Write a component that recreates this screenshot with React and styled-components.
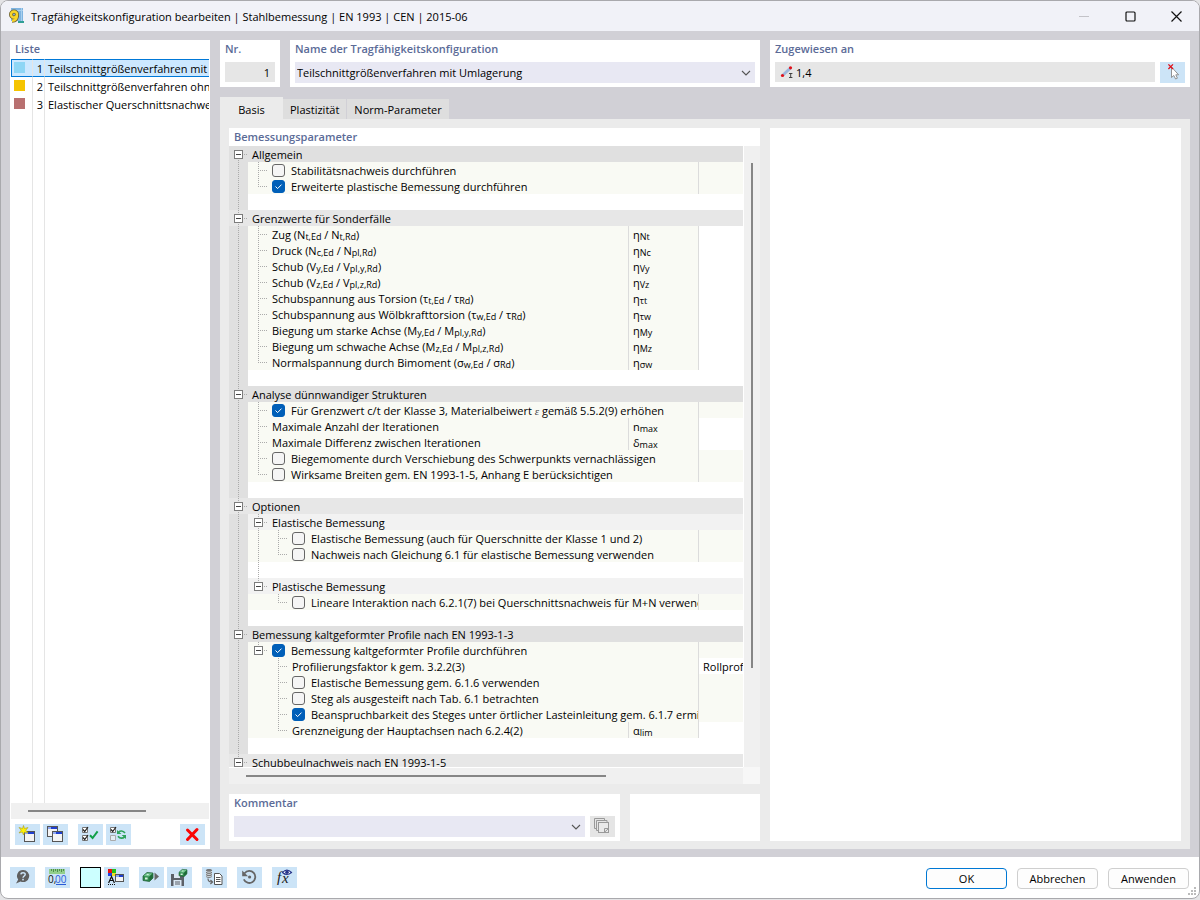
import React, { useState } from 'react';
import styled, { createGlobalStyle, css } from 'styled-components';

const Sub = styled.sub`
  position: relative;
  top: 1px;
  vertical-align: baseline;
  font-size: 9px;
  line-height: 1px;
`;

const Epsilon = styled.i`
  color: #444;
  font-family: "Liberation Serif", serif;
`;

const FormulaText = styled.text`
  fill: #222;
  font-family: "Liberation Serif", serif;
  font-size: 15px;
  font-style: italic;
`;

const configurations = [
  { id: 1, color: '#8ed6f5', name: 'Teilschnittgrößenverfahren mit Umlagerung' },
  { id: 2, color: '#f5c400', name: 'Teilschnittgrößenverfahren ohne Umlagerung' },
  { id: 3, color: '#b87070', name: 'Elastischer Querschnittsnachweis' },
];

const tabs = ['Basis', 'Plastizität', 'Norm-Parameter'];

// One character per tree level:
// "|" line, "t" branch, "L" last branch, "F" / "M" / "E" first, middle and last toggle, " " nothing
const rows = [
  { type: 'group', tree: 'F', label: 'Allgemein' },
  { tree: '|t', check: false, label: 'Stabilitätsnachweis durchführen' },
  { tree: '|L', check: true, label: 'Erweiterte plastische Bemessung durchführen' },
  { type: 'blank', tree: '|' },
  { type: 'group', light: true, tree: 'M', label: 'Grenzwerte für Sonderfälle' },
  { tree: '|t', label: <>Zug (N<Sub>t,Ed</Sub> / N<Sub>t,Rd</Sub>)</>, symbol: ['η', 'Nt'] },
  { tree: '|t', label: <>Druck (N<Sub>c,Ed</Sub> / N<Sub>pl,Rd</Sub>)</>, symbol: ['η', 'Nc'] },
  { tree: '|t', label: <>Schub (V<Sub>y,Ed</Sub> / V<Sub>pl,y,Rd</Sub>)</>, symbol: ['η', 'Vy'] },
  { tree: '|t', label: <>Schub (V<Sub>z,Ed</Sub> / V<Sub>pl,z,Rd</Sub>)</>, symbol: ['η', 'Vz'] },
  { tree: '|t', label: <>Schubspannung aus Torsion (τ<Sub>t,Ed</Sub> / τ<Sub>Rd</Sub>)</>, symbol: ['η', 'τt'] },
  { tree: '|t', label: <>Schubspannung aus Wölbkrafttorsion (τ<Sub>w,Ed</Sub> / τ<Sub>Rd</Sub>)</>, symbol: ['η', 'τw'] },
  { tree: '|t', label: <>Biegung um starke Achse (M<Sub>y,Ed</Sub> / M<Sub>pl,y,Rd</Sub>)</>, symbol: ['η', 'My'] },
  { tree: '|t', label: <>Biegung um schwache Achse (M<Sub>z,Ed</Sub> / M<Sub>pl,z,Rd</Sub>)</>, symbol: ['η', 'Mz'] },
  { tree: '|L', label: <>Normalspannung durch Bimoment (σ<Sub>w,Ed</Sub> / σ<Sub>Rd</Sub>)</>, symbol: ['η', 'σw'] },
  { type: 'blank', tree: '|' },
  { type: 'group', tree: 'M', label: 'Analyse dünnwandiger Strukturen' },
  { tree: '|t', check: true, label: <>Für Grenzwert c/t der Klasse 3, Materialbeiwert <Epsilon>ε</Epsilon> gemäß 5.5.2(9) erhöhen</> },
  { tree: '|t', label: 'Maximale Anzahl der Iterationen', symbol: ['n', 'max'] },
  { tree: '|t', label: 'Maximale Differenz zwischen Iterationen', symbol: ['δ', 'max'] },
  { tree: '|t', check: false, label: 'Biegemomente durch Verschiebung des Schwerpunkts vernachlässigen' },
  { tree: '|L', check: false, label: 'Wirksame Breiten gem. EN 1993-1-5, Anhang E berücksichtigen' },
  { type: 'blank', tree: '|' },
  { type: 'group', light: true, tree: 'M', label: 'Optionen' },
  { type: 'subgroup', tree: '|M', label: 'Elastische Bemessung' },
  { tree: '||t', check: false, label: 'Elastische Bemessung (auch für Querschnitte der Klasse 1 und 2)' },
  { tree: '||L', check: false, label: 'Nachweis nach Gleichung 6.1 für elastische Bemessung verwenden' },
  { type: 'blank', tree: '||' },
  { type: 'subgroup', tree: '|E', label: 'Plastische Bemessung' },
  { tree: '| L', check: false, label: 'Lineare Interaktion nach 6.2.1(7) bei Querschnittsnachweis für M+N verwenden' },
  { type: 'blank', tree: '|' },
  { type: 'group', tree: 'M', label: 'Bemessung kaltgeformter Profile nach EN 1993-1-3' },
  { tree: '|E', check: true, label: 'Bemessung kaltgeformter Profile durchführen' },
  { tree: '| t', label: 'Profilierungsfaktor k gem. 3.2.2(3)', value: 'Rollprofilieren' },
  { tree: '| t', check: false, label: 'Elastische Bemessung gem. 6.1.6 verwenden' },
  { tree: '| t', check: false, label: 'Steg als ausgesteift nach Tab. 6.1 betrachten' },
  { tree: '| t', check: true, label: 'Beanspruchbarkeit des Steges unter örtlicher Lasteinleitung gem. 6.1.7 ermitteln' },
  { tree: '| L', label: 'Grenzneigung der Hauptachsen nach 6.2.4(2)', symbol: ['α', 'lim'] },
  { type: 'blank', tree: '|' },
  { type: 'group', light: true, tree: 'M', label: 'Schubbeulnachweis nach EN 1993-1-5' },
];

function TreeRow({ row, index }) {
  const [checked, setChecked] = useState(Boolean(row.check));
  const hasCheck = row.check !== undefined;
  const id = `param-${index}`;

  const renderTree = () => row.tree.split('').map((kind, level) => (
    <Branch key={level} $root={level === 0} $kind={kind} $light={row.light}>
      {'FME'.includes(kind) && <Toggle type="button" aria-label="Zuklappen" />}
    </Branch>
  ));

  if (row.type) {
    return (
      <tr>
        <TreeCell colSpan={3} $type={row.type} $light={row.light}>
          <CellContent>
            {renderTree()}
            <Label as="span">{row.label}</Label>
          </CellContent>
        </TreeCell>
      </tr>
    );
  }

  return (
    <tr>
      <TreeCell colSpan={row.symbol ? 1 : 2}>
        <CellContent>
          {renderTree()}
          {hasCheck && (
            <Checkbox type="checkbox" id={id} checked={checked} onChange={() => setChecked(!checked)} />
          )}
          <Label as={hasCheck ? 'label' : 'span'} htmlFor={hasCheck ? id : undefined}>
            {row.label}
          </Label>
        </CellContent>
      </TreeCell>
      {row.symbol && (
        <TreeCell $divider>
          <CellContent>
            <Label as="span">
              {row.symbol[0]}
              <Sub>{row.symbol[1]}</Sub>
            </Label>
          </CellContent>
        </TreeCell>
      )}
      <TreeCell $divider $type={hasCheck ? undefined : 'blank'}>
        <CellContent><Label as="span">{row.value}</Label></CellContent>
      </TreeCell>
    </tr>
  );
}

function WindowShape({ x, y, w = 11, h = 11 }) {
  return (
    <g>
      <rect x={x + 0.5} y={y + 0.5} width={w - 1} height={h - 1} fill="#f4f4f4" stroke="#555" />
      <rect x={x + 1} y={y + 1} width={w - 2} height="2" fill="#1f3fd0" />
      <rect x={x + 1} y={y + 1} width="3" height="2" fill="#8fa8f0" />
    </g>
  );
}

function CubeShape({ x, y, w, h }) {
  return (
    <g transform={`translate(${x} ${y}) scale(${w / 10} ${h / 10})`}>
      <path d="M0 4 L4 0.5 L10 1 L10 6 L6.5 9.5 L0 8.5 Z" fill="#2f8a4c" stroke="#1b5a30" strokeWidth="0.7" />
      <path d="M0.5 4 L4 1 L9.5 1.4 L6.4 4.6 Z" fill="#6cc088" />
      <path d="M6.4 4.6 L9.6 1.6 L9.6 6 L6.4 9 Z" fill="#1e6a38" />
      <path d="M2 5.6 h2.6 v2 h-2.6 z M4.2 2 l2 0.2 l-1 1 l-2 -0.2 z" fill="#d6f3df" />
    </g>
  );
}

const icons = {
  add: (
    <>
      <WindowShape x={9} y={7} />
      <path d="M8.5 1.5 L9.5 4.5 L13 3.5 L10.8 6.2 L13 9 L9.6 8 L8.5 11 L7.4 8 L4 9 L6.2 6.2 L4 3.5 L7.5 4.5 Z" fill="#fff200" stroke="#a89a20" strokeWidth="0.6" />
    </>
  ),
  copy: (
    <>
      <WindowShape x={4} y={2} />
      <WindowShape x={9} y={7} />
    </>
  ),
  checkAll: (
    <>
      <path d="M4.5 3.5 h5 v5 h-5 z M4.5 11.5 h5 v5 h-5 z" fill="#fff" stroke="#777" />
      <path d="M5 5.5 L6.7 7.5 L10 3 M5 13.5 L6.7 15.5 L10 11" fill="none" stroke="#222" strokeWidth="1.2" />
      <path d="M12 11.2 L14.6 14 L19.6 7.4" fill="none" stroke="#12a04a" strokeWidth="2" />
    </>
  ),
  checkSwap: (
    <>
      <path d="M4.5 3.5 h5 v5 h-5 z" fill="#fff" stroke="#777" />
      <path d="M4.5 11.5 h5 v5 h-5 z" fill="#e4edf5" stroke="#aaa" />
      <path d="M5 5.5 L6.7 7.5 L10 3" fill="none" stroke="#222" strokeWidth="1.2" />
      <path d="M19 9 C17 6.4 14 6.6 12.6 8.2 M12 12.2 C14 14.8 17 14.4 18.6 12.8" fill="none" stroke="#2fa35c" strokeWidth="1.7" />
      <path d="M11 6 V10 H15.4 Z M20 15 V11 H15.6 Z" fill="#2fa35c" />
    </>
  ),
  remove: <path d="M7.5 6 L17 15.5 M17 5.5 L7.5 15.5" fill="none" stroke="#fa0505" strokeWidth="3" strokeLinecap="round" />,
  help: (
    <>
      <path d="M13 3 a6 6 0 1 1 -2.4 11.4 L6 16.5 L8.2 12.6 A6 6 0 0 1 13 3 Z" fill="#5f5f5f" />
      <path d="M10.9 7.4 C11 5.2 15.2 5 15.2 7.5 C15.2 9 13 9 13 10.8" fill="none" stroke="#cce4f7" strokeWidth="1.5" />
      <rect x="12.2" y="11.8" width="1.6" height="1.6" fill="#cce4f7" />
    </>
  ),
  units: (
    <>
      <rect x="4" y="2" width="16" height="5" fill="#93cf8c" />
      <path d="M6.5 2 v2 M8.5 2 v3 M10.5 2 v2 M12.5 2 v3 M14.5 2 v2 M16.5 2 v3 M18.5 2 v2" stroke="#4f8f4c" />
      <text x="3" y="16" fontSize="10" fill="#111">0,</text>
      <text x="10" y="16" fontSize="10" fill="#2a5bd7">00</text>
      <path d="M11 17.5 h10" stroke="#2a5bd7" />
    </>
  ),
  display: (
    <>
      <rect x="4" y="2" width="4" height="4" fill="#e81010" />
      <rect x="8" y="2" width="4" height="4" fill="#20c020" />
      <rect x="4" y="6" width="4" height="3" fill="#2040e0" />
      <rect x="8" y="6" width="4" height="3" fill="#f0e020" />
      <path d="M4.6 16 L7.5 9.5 L10.4 16 M5.6 13.5 h3.8" fill="none" stroke="#111" strokeWidth="1.2" />
      <path d="M4 17.5 h8" stroke="#111" strokeDasharray="1 1" />
      <WindowShape x={11} y={7} w={9} h={8} />
    </>
  ),
  run: (
    <>
      <CubeShape x={4} y={5} w={10} h={10} />
      <path d="M15.5 5.5 L20 9.5 L15.5 13.5 Z" fill="#666" />
    </>
  ),
  save: (
    <>
      <path d="M4 7 H15 L17 9 V19 H4 Z" fill="#5c6168" />
      <rect x="7" y="7" width="6" height="4" fill="#dbe8f3" />
      <rect x="6.5" y="13" width="8" height="6" fill="#dbe8f3" />
      <path d="M8 15 h5 M8 17 h5" stroke="#5c6168" />
      <CubeShape x={12} y={2} w={8} h={8} />
    </>
  ),
  database: (
    <>
      <path d="M4 3.4 C4 1.6 10 1.6 10 3.4 V9.6 C10 11.4 4 11.4 4 9.6 Z" fill="#777" />
      <path d="M4 4.2 C5 5.6 9 5.6 10 4.2 M4 6.4 C5 7.8 9 7.8 10 6.4 M4 8.6 C5 10 9 10 10 8.6" fill="none" stroke="#e6f0f8" strokeWidth="0.8" />
      <path d="M6 11.5 C6 14 7 15 9.5 15 M8.4 13 L10.6 15 L8.4 17" fill="none" stroke="#666" strokeWidth="1.2" />
      <path d="M12.5 6.5 H17.5 L20 9 V17.5 H12.5 Z" fill="#fff" stroke="#555" />
      <path d="M14 10.5 h4.5 M14 12.5 h4.5 M14 14.5 h4.5" stroke="#555" />
    </>
  ),
  reset: (
    <>
      <path d="M7.6 6.2 A6 6 0 1 1 6.8 12.4" fill="none" stroke="#666" strokeWidth="1.8" />
      <path d="M5.2 3.4 V9.2 H11 Z" fill="#666" />
      <circle cx="12.6" cy="10" r="1.6" fill="#666" />
    </>
  ),
  formula: (
    <>
      <FormulaText x="5" y="15">f</FormulaText>
      <FormulaText x="10" y="16">x</FormulaText>
      <path d="M10.5 5.5 Q14.8 0.8 19.5 5.5 Q14.8 9.5 10.5 5.5 Z" fill="#fff" stroke="#26348a" strokeWidth="1.1" />
      <circle cx="15" cy="5.3" r="1.8" fill="#26348a" />
    </>
  ),
  pick: (
    <>
      <path d="M11.5 5 V15.5 L13.8 13.5 L15.6 17 L17.4 16.2 L15.8 12.8 H18.6 Z" fill="#fff" stroke="#888" strokeWidth="0.9" />
      <path d="M8.4 2.4 L13 7 M13 2.4 L8.4 7" stroke="#e0101a" strokeWidth="1.3" />
    </>
  ),
  comment: (
    <>
      <path d="M14.5 4 V2.5 H4.5 V12.5 H6 M17 6 V4.5 H6.5 V14.5 H8" fill="none" stroke="#999" />
      <rect x="8.5" y="6.5" width="10" height="10" fill="#e9e9e9" stroke="#999" />
      <path d="M14.5 16.5 V12.5 H18.5 M14.8 16 L18.2 12.8" fill="none" stroke="#999" />
    </>
  ),
};

function ToolButton({ icon, label, disabled }) {
  return (
    <IconButton type="button" aria-label={label} disabled={disabled}>
      <svg width="25" height="21" viewBox="0 0 25 21" aria-hidden="true">{icons[icon]}</svg>
    </IconButton>
  );
}

function Chevron() {
  return (
    <ChevronIcon width="10" height="6" viewBox="0 0 10 6" aria-hidden="true">
      <path d="M1 1 L5 5 L9 1" fill="none" stroke="#555" strokeWidth="1.1" />
    </ChevronIcon>
  );
}

function App() {
  const [selected, setSelected] = useState(1);
  const [tab, setTab] = useState('Basis');

  return (
    <Window>
      <GlobalStyle />
      <TitleBar>
        <svg width="16" height="16" viewBox="0 0 16 16" aria-hidden="true">
          <rect x="2" y="0" width="12" height="13" fill="#7fb4e0" />
          <path d="M2 2.5 h12 M12.5 0 v13" stroke="#a9d0ef" />
          <path d="M9 13 h6 v2 h-6 z" fill="#2f9f95" />
          <circle cx="5" cy="6.5" r="3" fill="none" stroke="#6d6232" strokeWidth="4" />
          <path d="M8 7 C8 11 6.4 12.6 3 12.8" fill="none" stroke="#6d6232" strokeWidth="4" />
          <circle cx="5" cy="6.5" r="3" fill="none" stroke="#f7d52c" strokeWidth="2.4" />
          <path d="M8 7 C8 11 6.4 12.6 3 12.8" fill="none" stroke="#f7d52c" strokeWidth="2.4" />
        </svg>
        <WindowTitle>Tragfähigkeitskonfiguration bearbeiten | Stahlbemessung | EN 1993 | CEN | 2015-06</WindowTitle>
        <CaptionButton type="button" aria-label="Minimieren" disabled>
          <svg width="11" height="11"><path d="M0 5.5 h10" stroke="#c3c3c8" /></svg>
        </CaptionButton>
        <CaptionButton type="button" aria-label="Maximieren">
          <svg width="11" height="11"><rect x="1" y="1" width="9" height="9" rx="1" fill="none" stroke="#111" strokeWidth="1.2" /></svg>
        </CaptionButton>
        <CaptionButton type="button" aria-label="Schließen">
          <svg width="11" height="11"><path d="M0.5 0.5 L10.5 10.5 M10.5 0.5 L0.5 10.5" stroke="#111" strokeWidth="1.2" /></svg>
        </CaptionButton>
      </TitleBar>

      <Body>
        <ListPanel>
          <PanelTitle>Liste</PanelTitle>
          <ListArea>
            <ListTable>
              <tbody>
                {configurations.map((item) => (
                  <ListRow key={item.id} $selected={item.id === selected} onClick={() => setSelected(item.id)}>
                    <td><Swatch $color={item.color} /></td>
                    <td>{item.id}</td>
                    <td>{item.name}</td>
                  </ListRow>
                ))}
              </tbody>
            </ListTable>
          </ListArea>
          <ListScroll><Thumb $length="72%" /></ListScroll>
          <ListTools>
            <ToolGroup>
              <ToolButton icon="add" label="Neu" />
              <ToolButton icon="copy" label="Kopieren" />
            </ToolGroup>
            <ToolGroup>
              <ToolButton icon="checkAll" label="Alle auswählen" />
              <ToolButton icon="checkSwap" label="Auswahl umkehren" />
            </ToolGroup>
            <Spacer />
            <ToolButton icon="remove" label="Löschen" />
          </ListTools>
        </ListPanel>

        <Content>
          <Header>
            <Panel>
              <PanelTitle as="label" htmlFor="number">Nr.</PanelTitle>
              <Field><NumberInput id="number" value={selected} readOnly /></Field>
            </Panel>
            <Panel>
              <PanelTitle as="label" htmlFor="name">Name der Tragfähigkeitskonfiguration</PanelTitle>
              <Field>
                <SelectBox>
                  <Select id="name" value={selected} onChange={(e) => setSelected(Number(e.target.value))}>
                    {configurations.map((item) => <option key={item.id} value={item.id}>{item.name}</option>)}
                  </Select>
                  <Chevron />
                </SelectBox>
              </Field>
            </Panel>
            <Panel>
              <PanelTitle as="label" htmlFor="assigned">Zugewiesen an</PanelTitle>
              <Field>
                <AssignedBox>
                  <svg width="20" height="20" viewBox="0 0 20 20" aria-hidden="true">
                    <path d="M7.5 13.5 L15.5 6" stroke="#9db7dc" strokeWidth="3" />
                    <circle cx="7.5" cy="13.5" r="1.6" fill="#e0101a" />
                    <circle cx="15.5" cy="5.8" r="1.6" fill="#e0101a" />
                    <path d="M14 11.5 h3.4 M14 15.5 h3.4 M15.7 11.5 v4" stroke="#333" strokeWidth="0.9" />
                  </svg>
                  <AssignedInput id="assigned" defaultValue="1,4" readOnly />
                </AssignedBox>
                <ToolButton icon="pick" label="Objekte wählen" />
              </Field>
            </Panel>
          </Header>

          <TabList role="tablist">
            {tabs.map((name) => (
              <Tab key={name} type="button" role="tab" aria-selected={name === tab} $active={name === tab} onClick={() => setTab(name)}>
                {name}
              </Tab>
            ))}
          </TabList>

          <TabBody>
            <LeftColumn>
              <TreePanel>
                <TreeTitle>Bemessungsparameter</TreeTitle>
                <TreeArea>
                  <TreeClip>
                    <TreeTable>
                      <colgroup>
                        <col />
                        <SymbolCol />
                        <ValueCol />
                      </colgroup>
                      <tbody>
                        {rows.map((row, index) => <TreeRow key={index} row={row} index={index} />)}
                      </tbody>
                    </TreeTable>
                  </TreeClip>
                  <VerticalScroll><VerticalThumb /></VerticalScroll>
                </TreeArea>
                <BottomScroll>
                  <HorizontalScroll><Thumb $length="75%" /></HorizontalScroll>
                </BottomScroll>
              </TreePanel>
              <CommentRow>
                <Panel>
                  <PanelTitle as="label" htmlFor="comment">Kommentar</PanelTitle>
                  <Field>
                    <SelectBox>
                      <Select id="comment"><option value="" aria-label="leer" /></Select>
                      <Chevron />
                    </SelectBox>
                    <ToolButton icon="comment" label="Kommentare" disabled />
                  </Field>
                </Panel>
                <Panel />
              </CommentRow>
            </LeftColumn>
            <Preview />
          </TabBody>
        </Content>
      </Body>

      <Footer>
        <ToolButton icon="help" label="Hilfe" />
        <ToolButton icon="units" label="Einheiten" />
        <ToolGroup>
          <ColorButton type="button" aria-label="Farbe" />
          <ToolButton icon="display" label="Anzeige" />
        </ToolGroup>
        <ToolGroup>
          <ToolButton icon="run" label="Laden" />
          <ToolButton icon="save" label="Speichern" />
        </ToolGroup>
        <ToolButton icon="database" label="Datenbank" />
        <ToolButton icon="reset" label="Zurücksetzen" />
        <ToolButton icon="formula" label="Formel" />
        <Spacer />
        <DialogButton type="button" $primary>OK</DialogButton>
        <DialogButton type="button">Abbrechen</DialogButton>
        <DialogButton type="button">Anwenden</DialogButton>
        <Grip width="9" height="9" viewBox="0 0 9 9" aria-hidden="true">
          <path d="M6 0h2v2h-2z M6 3h2v2h-2z M6 6h2v2h-2z M3 3h2v2h-2z M3 6h2v2h-2z M0 6h2v2h-2z" fill="#bbb" />
        </Grip>
      </Footer>
    </Window>
  );
}

const GlobalStyle = createGlobalStyle`
  * {
    box-sizing: border-box;
  }

  body {
    margin: 0;
    background-color: #e4e4e6;
    color: #000;
    font-family: "Open Sans", "Noto Sans", sans-serif;
    font-size: 11px;
  }

  button, input, select {
    margin: 0;
    padding: 0;
    border: 0;
    border-radius: 0;
    color: inherit;
    font: inherit;
  }
`;

const Window = styled.div`
  display: flex;
  flex-direction: column;
  height: calc(100vh - 1px);
  overflow: hidden;
  border: 1px solid #a9a9ad;
  border-radius: 8px;
  background-color: #ffffff;
`;

const TitleBar = styled.header`
  display: flex;
  flex: none;
  align-items: center;
  height: 30px;
  padding-left: 8px;
  background-color: #f1f2f8;
`;

const WindowTitle = styled.h1`
  flex: 1;
  margin: 0 0 0 6px;
  font-size: 11px;
  font-weight: 400;
`;

const CaptionButton = styled.button`
  display: flex;
  align-items: center;
  justify-content: center;
  width: 46px;
  height: 30px;
  background: none;
`;

const Body = styled.main`
  display: flex;
  flex: 1;
  gap: 10px;
  min-height: 0;
  padding: 9px 9px 8px;
  background-color: #d1d0d6;
`;

const Panel = styled.section`
  min-width: 0;
  min-height: 47px;
  padding: 0 5px 4px;
  background-color: #ffffff;
`;

const PanelTitle = styled.h2`
  display: block;
  height: 22px;
  margin: 0;
  color: #5b6b97;
  font-size: 11px;
  font-weight: 600;
  line-height: 18px;
`;

const ListPanel = styled.section`
  display: flex;
  flex: 0 0 200px;
  flex-direction: column;
  min-width: 0;
  padding: 0 1px;
  background-color: #ffffff;

  ${PanelTitle} {
    height: 19px;
    padding-left: 4px;
  }
`;

const ListArea = styled.div`
  flex: 1;
  min-height: 0;
  overflow: hidden;
  background-image: linear-gradient(#e5e5e5, #e5e5e5), linear-gradient(#e5e5e5, #e5e5e5);
  background-position: 21px 0, 33px 0;
  background-repeat: no-repeat;
  background-size: 1px 100%;
`;

const ListTable = styled.table`
  width: 100%;
  border-collapse: separate;
  border-spacing: 0;
  table-layout: fixed;
`;

const ListRow = styled.tr`
  height: 18px;
  cursor: default;

  td {
    overflow: hidden;
    padding: 2px 0 0;
    white-space: nowrap;
    line-height: 14px;
    border: 1px solid transparent;
    border-width: 1px 0;
    ${({ $selected }) => $selected && css`
      background-color: #cce8ff;
      border-color: #0078d7;
    `}
  }

  td:nth-child(1) {
    width: 22px;
    padding-left: 2px;
    vertical-align: top;
    border-left-width: 1px;
    border-right: 1px solid #e5e5e5;
  }

  td:nth-child(2) {
    width: 12px;
    text-align: right;
    padding-right: 1px;
    border-right: 1px solid #e5e5e5;
  }

  td:nth-child(3) {
    padding-left: 3px;
  }
`;

const Swatch = styled.span`
  display: block;
  width: 11px;
  height: 11px;
  background-color: ${({ $color }) => $color};
`;

const ListScroll = styled.div`
  display: flex;
  flex: none;
  align-items: center;
  height: 16px;
  padding: 0 17px;
  background-color: #f0f0f0;
`;

const Thumb = styled.div`
  width: ${({ $length }) => $length};
  height: 2px;
  background-color: #868686;
`;

const ListTools = styled.div`
  display: flex;
  gap: 10px;
  padding: 5px 4px 4px;
`;

const ToolGroup = styled.div`
  display: flex;
  gap: 3px;
`;

const Spacer = styled.div`
  flex: 1;
`;

const IconButton = styled.button`
  flex: none;
  width: 25px;
  height: 21px;
  background-color: #cce4f7;

  &:disabled {
    background-color: #e5e5e5;
  }

  svg {
    display: block;
  }
`;

const ColorButton = styled.button`
  width: 21px;
  height: 21px;
  border: 1px solid #000;
  background-color: #ccffff;
`;

const Content = styled.div`
  display: flex;
  flex: 1;
  flex-direction: column;
  min-width: 0;
`;

const Header = styled.div`
  display: grid;
  grid-template-columns: 60px minmax(0, 470fr) minmax(0, 420fr);
  gap: 10px;
`;

const Field = styled.div`
  display: flex;
  gap: 5px;
`;

const NumberInput = styled.input`
  width: 100%;
  height: 20px;
  padding-right: 5px;
  background-color: #e6e6e6;
  text-align: right;
`;

const SelectBox = styled.div`
  position: relative;
  flex: 1;
`;

const Select = styled.select`
  display: block;
  width: 100%;
  height: 21px;
  padding: 0 20px 0 2px;
  appearance: none;
  background-color: #e8e8f3;
`;

const ChevronIcon = styled.svg`
  position: absolute;
  top: 8px;
  right: 4px;
  pointer-events: none;
`;

const AssignedBox = styled.div`
  display: flex;
  flex: 1;
  height: 20px;
  background-color: #e6e6e6;
`;

const AssignedInput = styled.input`
  flex: 1;
  min-width: 0;
  padding-left: 1px;
  background: none;
  font-size: 11px;
`;

const TabList = styled.div`
  display: flex;
  align-items: flex-end;
  height: 22px;
  margin-top: 10px;
`;

const Tab = styled.button`
  min-width: 63px;
  height: 20px;
  padding: 0 7px;
  border-right: 1px solid #d1d0d6;
  background-color: #dedede;

  ${({ $active }) => $active && css`
    height: 22px;
    padding-top: 2px;
    border-right: 0;
    background-color: #ebebeb;
  `}
`;

const TabBody = styled.div`
  display: grid;
  flex: 1;
  grid-template-columns: minmax(0, 531fr) minmax(0, 411fr);
  gap: 10px;
  min-height: 0;
  padding: 9px 9px 8px;
  background-color: #ebebeb;
`;

const LeftColumn = styled.div`
  display: flex;
  flex-direction: column;
  gap: 10px;
  min-height: 0;
`;

const TreePanel = styled.section`
  display: flex;
  flex: 1;
  flex-direction: column;
  min-height: 0;
  background-color: #ffffff;
`;

const TreeTitle = styled(PanelTitle)`
  height: 18px;
  padding-left: 5px;
`;

const TreeArea = styled.div`
  display: flex;
  flex: 1;
  gap: 1px;
  min-height: 0;
`;

const TreeClip = styled.div`
  flex: 1;
  min-width: 0;
  overflow: hidden;
`;

const TreeTable = styled.table`
  width: 100%;
  border-collapse: separate;
  border-spacing: 0;
  table-layout: fixed;
`;

const SymbolCol = styled.col`
  width: 70px;
`;

const ValueCol = styled.col`
  width: 45px;
`;

const cellColors = { group: '#e0e0e0', subgroup: '#f2f2f2', blank: '#ffffff' };

const TreeCell = styled.td`
  height: 16px;
  padding: 0;
  overflow: hidden;
  border-left: ${({ $divider }) => ($divider ? '1px solid #dcdcdc' : '0')};
  background-color: ${({ $type, $light }) => ($light ? '#e7e7e7' : cellColors[$type] || '#f9faf4')};
`;

const CellContent = styled.div`
  display: flex;
  align-items: center;
  height: 16px;
  overflow: hidden;
  white-space: nowrap;
`;

// dotted lines are drawn as backgrounds: the upper half, the lower half and the arm to the right
const dotsDown = 'repeating-linear-gradient(#ababab 0 1px, transparent 1px 2px)';
const dotsRight = 'repeating-linear-gradient(90deg, #ababab 0 1px, transparent 1px 2px)';

const Branch = styled.span`
  display: flex;
  flex: none;
  align-items: center;
  width: ${({ $root }) => ($root ? 19 : 20)}px;
  height: 16px;
  padding-left: ${({ $root }) => ($root ? 5 : 6)}px;
  background-color: ${({ $root, $light }) => ($root && !$light ? '#e0e0e0' : 'transparent')};
  background-image: ${({ $kind }) => [
    '|tLME'.includes($kind) ? dotsDown : 'none',
    '|tFM'.includes($kind) ? dotsDown : 'none',
    'tLFME'.includes($kind) ? dotsRight : 'none',
  ].join(', ')};
  background-position: ${({ $root }) => ($root ? '9px 0, 9px 8px, 9px 8px' : '10px 0, 10px 8px, 10px 8px')};
  background-repeat: no-repeat;
  background-size: 1px 8px, 1px 8px, 10px 1px;
`;

const Toggle = styled.button`
  width: 9px;
  height: 9px;
  border: 1px solid #7c7c7c;
  background: linear-gradient(#444, #444) center / 5px 1px no-repeat #ffffff;
`;

const Checkbox = styled.input`
  flex: none;
  width: 13px;
  height: 13px;
  margin: 0 2px 0 4px;
  appearance: none;
  border: 1px solid #666;
  border-radius: 3px;
  background-color: #f5f5f5;

  &:checked {
    border-color: #005fb8;
    background: #005fb8 url("data:image/svg+xml,%3Csvg xmlns='http://www.w3.org/2000/svg' viewBox='0 0 11 11'%3E%3Cpath d='M2.5 5.5 L4.6 7.6 L8.5 3.6' fill='none' stroke='white'/%3E%3C/svg%3E") center / 11px 11px no-repeat;
  }
`;

const Label = styled.span`
  padding-top: 2px;
  padding-left: 4px;
  line-height: 16px;
`;

const VerticalScroll = styled.div`
  display: flex;
  justify-content: center;
  width: 16px;
  padding: 17px 0;
  background-color: #f0f0f0;
`;

const VerticalThumb = styled.div`
  width: 2px;
  height: 86%;
  background-color: #868686;
`;

const BottomScroll = styled.div`
  display: flex;
  flex: none;
  height: 17px;
  padding-right: 17px;
  background-color: #f7f7f7;
`;

const HorizontalScroll = styled.div`
  display: flex;
  flex: 1;
  align-items: center;
  padding: 0 17px;
  border-top: 1px solid #ffffff;
  background-color: #f0f0f0;
`;

const CommentRow = styled.div`
  display: grid;
  grid-template-columns: minmax(0, 391fr) minmax(0, 130fr);
  gap: 10px;
`;

const Preview = styled.section`
  background-color: #ffffff;
`;

const Footer = styled.footer`
  position: relative;
  display: flex;
  flex: none;
  gap: 10px;
  height: 41px;
  padding: 10px 10px 0 9px;
`;

const DialogButton = styled.button`
  min-width: 81px;
  height: 21px;
  margin-top: 1px;
  border: 1px solid ${({ $primary }) => ($primary ? '#0078d4' : '#cfcfcf')};
  border-radius: 4px;
  background-color: #fdfdfd;
`;

const Grip = styled.svg`
  position: absolute;
  right: 2px;
  bottom: 2px;
`;

export default App;
